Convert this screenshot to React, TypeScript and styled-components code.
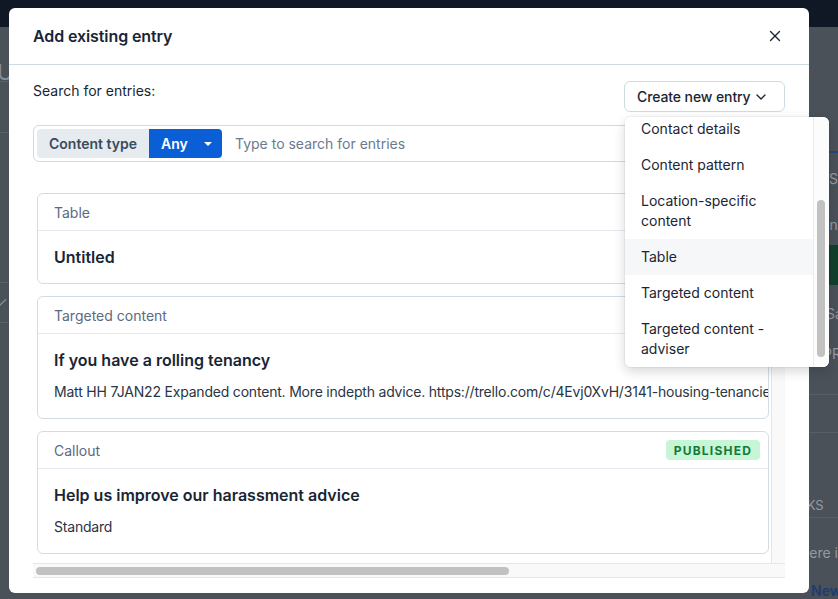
import React from 'react';
import styled, { createGlobalStyle } from 'styled-components';
import { X, ChevronDown, Check } from 'lucide-react';

const GlobalStyle = createGlobalStyle`
  html, body { margin: 0; padding: 0; }
  body { font-family: Inter, "Noto Sans", "Liberation Sans", sans-serif; }
  * { box-sizing: border-box; }
`;

const colors = {
  ink: '#1a2533',
  muted: '#5b6a80',
  border: '#d3dce3',
  divider: '#e3e9ee',
  blue: '#0b5fd6',
};

/* ---------- dimmed app behind the modal ---------- */

const Page = styled.div`
  position: relative;
  width: 838px;
  height: 599px;
  overflow: hidden;
  display: grid;
  grid-template-rows: 27px 1fr;
  background: #4a5159;
`;

const TopBar = styled.div`
  background: #0f1824;
`;

const Shell = styled.div`
  display: grid;
  grid-template-columns: 240px 1fr 62px;
`;

const SideRail = styled.div`
  display: flex;
  flex-direction: column;
  color: #878e96;
`;

interface RailRowProps {
  h: number;
  line?: boolean;
}

const RailRow = styled.div<RailRowProps>`
  height: ${(p) => p.h}px;
  display: flex;
  align-items: center;
  border-bottom: ${(p) => (p.line ? '1px solid #5a6169' : 'none')};
  font-size: 14px;
`;

const RailTitle = styled.span`
  font-size: 22px;
  margin-left: -3px;
  margin-top: 36px;
`;

const RightRail = styled.div`
  display: flex;
  flex-direction: column;
  color: #959ba2;
  font-size: 14px;
  white-space: nowrap;
  overflow: hidden;
`;

interface RailTextProps {
  indent: number;
  h: number;
  tone?: string;
}

const RailText = styled.div<RailTextProps>`
  flex-shrink: 0;
  height: ${(p) => p.h}px;
  padding-left: ${(p) => p.indent}px;
  display: flex;
  align-items: center;
  color: ${(p) => p.tone || 'inherit'};
`;

const TabLine = styled.div`
  flex-shrink: 0;
  height: 126px;
  border-bottom: 2px solid #23467a;
`;

const GreenBlock = styled.div`
  flex-shrink: 0;
  height: 40px;
  margin-left: 50px;
  background: #123f2c;
`;

const RuleRow = styled.div<{ h: number; line?: boolean }>`
  flex-shrink: 0;
  height: ${(p) => p.h}px;
  border-bottom: ${(p) => (p.line === false ? 'none' : '1px solid #575e66')};
`;

/* ---------- modal ---------- */

const Modal = styled.div`
  position: absolute;
  top: 8px;
  left: 9px;
  width: 800px;
  height: 585px;
  background: #fff;
  border-radius: 6px;
  display: flex;
  flex-direction: column;
  color: ${colors.ink};
`;

const Header = styled.div`
  height: 57px;
  flex-shrink: 0;
  padding: 0 24px;
  display: flex;
  align-items: center;
  justify-content: space-between;
  border-bottom: 1px solid #cfdbe2;
`;

const Title = styled.h2`
  margin: 0;
  font-size: 16px;
  font-weight: 600;
  letter-spacing: -0.1px;
`;

const CloseButton = styled.button`
  width: 24px;
  height: 24px;
  margin-right: -2px;
  border: none;
  background: none;
  padding: 0;
  display: flex;
  align-items: center;
  justify-content: center;
  color: ${colors.ink};
`;

const Body = styled.div`
  flex: 1;
  padding: 16px 24px 15px;
  display: flex;
  flex-direction: column;
`;

const TopRow = styled.div`
  height: 31px;
  display: flex;
  justify-content: space-between;
  align-items: flex-start;
`;

const Label = styled.span`
  font-size: 14px;
  line-height: 20px;
`;

const MenuWrap = styled.div`
  position: relative;
  z-index: 2;
`;

const CreateButton = styled.button`
  height: 31px;
  width: 161px;
  padding: 0 15px 0 12px;
  display: flex;
  align-items: center;
  justify-content: space-between;
  white-space: nowrap;
  border: 1px solid #cfdbe2;
  border-radius: 6px;
  background: #fff;
  font: inherit;
  font-size: 14px;
  font-weight: 500;
  letter-spacing: -0.1px;
  color: ${colors.ink};
`;

const Menu = styled.div`
  position: absolute;
  top: calc(100% + 5px);
  left: 1px;
  width: 204px;
  height: 250px;
  background: #fff;
  border-radius: 6px;
  box-shadow: 0 4px 12px rgba(15, 24, 36, 0.18), 0 0 0 1px rgba(15, 24, 36, 0.04);
  display: grid;
  grid-template-columns: 1fr 16px;
  overflow: hidden;
`;

const MenuList = styled.div`
  overflow: hidden;
`;

const MenuItems = styled.div`
  margin-top: -6px;
`;

const MenuItem = styled.div<{ active?: boolean }>`
  padding: 8px 16px;
  font-size: 14px;
  line-height: 20px;
  background: ${(p) => (p.active ? '#f5f7f9' : '#fff')};
`;

const MenuTrack = styled.div`
  border-left: 1px solid #ececec;
  background: #fcfcfc;
  padding: 83px 0 0 3px;
`;

const MenuThumb = styled.div`
  width: 8px;
  height: 157px;
  border-radius: 4px;
  background: #c1c1c1;
`;

const SearchBar = styled.div`
  margin-top: 13px;
  height: 37px;
  border: 1px solid #cfdbe2;
  border-radius: 6px;
  padding: 3px;
  display: flex;
  align-items: stretch;
`;

const TypeLabel = styled.span`
  width: 112px;
  padding-left: 12px;
  display: flex;
  align-items: center;
  background: #e5ebee;
  border-radius: 4px 0 0 4px;
  font-size: 14px;
  font-weight: 600;
  color: #3b4a5c;
`;

const AnySelect = styled.span`
  width: 73px;
  padding: 0 10px 0 12px;
  display: flex;
  align-items: center;
  justify-content: space-between;
  background: ${colors.blue};
  border-radius: 0 4px 4px 0;
  color: #fff;
  font-size: 14px;
  font-weight: 600;
`;

const Caret = styled.span`
  width: 0;
  height: 0;
  border-left: 4px solid transparent;
  border-right: 4px solid transparent;
  border-top: 4px solid #fff;
`;

const SearchInput = styled.input`
  flex: 1;
  border: none;
  outline: none;
  padding-left: 13px;
  font: inherit;
  font-size: 14px;
  color: ${colors.ink};
  &::placeholder {
    color: #6b7a8f;
  }
`;

const ListFrame = styled.div`
  margin-top: 27px;
  height: 389px;
  display: grid;
  grid-template-columns: 1fr 14px;
  grid-template-rows: 1fr 15px;
`;

const ListViewport = styled.div`
  overflow: hidden;
  padding: 4px 2px 0 4px;
  display: flex;
  flex-direction: column;
  gap: 12px;
`;

const VTrack = styled.div`
  background: #f9f9f9;
  border-left: 1px solid #e6e6e6;
`;

const HTrack = styled.div`
  grid-column: 1 / span 2;
  background: #f9f9f9;
  border-top: 1px solid #e6e6e6;
  border-bottom: 1px solid #e6e6e6;
  padding: 3px 0 0 3px;
`;

const HThumb = styled.div<{ w: number }>`
  width: ${(p) => p.w}px;
  height: 8px;
  border-radius: 4px;
  background: #c1c1c1;
`;

const Card = styled.div`
  flex-shrink: 0;
  border: 1px solid ${colors.border};
  border-radius: 6px;
  overflow: hidden;
`;

const CardHead = styled.div`
  height: 37px;
  padding: 0 8px 0 16px;
  display: flex;
  align-items: center;
  justify-content: space-between;
  border-bottom: 1px solid ${colors.divider};
  font-size: 14px;
  color: ${colors.muted};
`;

const CardBody = styled.div`
  padding: 16px;
`;

const CardTitle = styled.div`
  font-size: 16px;
  line-height: 20px;
  font-weight: 600;
`;

const CardText = styled.div`
  margin-top: 12px;
  font-size: 14px;
  line-height: 20px;
  letter-spacing: -0.2px;
  color: #2a3545;
  white-space: nowrap;
`;

const Badge = styled.span`
  height: 20px;
  padding: 0 8px;
  display: flex;
  align-items: center;
  border-radius: 4px;
  background: #c6f6d5;
  color: #137a3a;
  font-size: 12px;
  font-weight: 700;
  letter-spacing: 1.2px;
`;

interface Entry {
  type: string;
  title: string;
  text?: string;
  published?: boolean;
}

const entries: Entry[] = [
  { type: 'Table', title: 'Untitled' },
  {
    type: 'Targeted content',
    title: 'If you have a rolling tenancy',
    text: 'Matt HH 7JAN22 Expanded content. More indepth advice. https://trello.com/c/4Evj0XvH/3141-housing-tenancies-rolling-tenancy',
  },
  {
    type: 'Callout',
    title: 'Help us improve our harassment advice',
    text: 'Standard',
    published: true,
  },
];

const menuItems = [
  'Contact details',
  'Content pattern',
  'Location-specific content',
  'Table',
  'Targeted content',
  'Targeted content - adviser',
];

const App: React.FC = () => {
  return (
    <Page>
      <GlobalStyle />
      <TopBar />
      <Shell>
        <SideRail>
          <RailRow h={55} line>
            <RailTitle>Untitled</RailTitle>
          </RailRow>
          <RailRow h={51} line />
          <RailRow h={150} line />
          <RailRow h={40} line>
            <Check size={14} color="#878e96" style={{ marginLeft: -6 }} />
          </RailRow>
        </SideRail>
        <div />
        <RightRail>
          <TabLine />
          <RailText h={50} indent={53}>Status</RailText>
          <RailText h={42} indent={14}>Content</RailText>
          <GreenBlock />
          <RailText h={56} indent={50}>Save</RailText>
          <RailText h={24} indent={47}>PREVIEW</RailText>
          <RuleRow h={30} />
          <RuleRow h={38} />
          <RuleRow h={60} line={false} />
          <RailText h={24} indent={10} style={{ fontSize: 13 }}>
            LINKS
          </RailText>
          <RuleRow h={1} />
          <RailText h={68} indent={16}>There is</RailText>
          <RailText h={8} indent={35} tone="#1f3d6e">
            <b>New</b>
          </RailText>
        </RightRail>
      </Shell>

      <Modal>
        <Header>
          <Title>Add existing entry</Title>
          <CloseButton aria-label="Close">
            <X size={18} strokeWidth={1.8} />
          </CloseButton>
        </Header>
        <Body>
          <TopRow>
            <Label>Search for entries:</Label>
            <MenuWrap>
              <CreateButton>
                Create new entry
                <ChevronDown size={16} strokeWidth={2} />
              </CreateButton>
              <Menu>
                <MenuList>
                  <MenuItems>
                    {menuItems.map((item) => (
                      <MenuItem key={item} active={item === 'Table'}>
                        {item}
                      </MenuItem>
                    ))}
                  </MenuItems>
                </MenuList>
                <MenuTrack>
                  <MenuThumb />
                </MenuTrack>
              </Menu>
            </MenuWrap>
          </TopRow>

          <SearchBar>
            <TypeLabel>Content type</TypeLabel>
            <AnySelect>
              Any
              <Caret />
            </AnySelect>
            <SearchInput placeholder="Type to search for entries" />
          </SearchBar>

          <ListFrame>
            <ListViewport>
              {entries.map((e) => (
                <Card key={e.title}>
                  <CardHead>
                    {e.type}
                    {e.published && <Badge>PUBLISHED</Badge>}
                  </CardHead>
                  <CardBody>
                    <CardTitle>{e.title}</CardTitle>
                    {e.text && <CardText>{e.text}</CardText>}
                  </CardBody>
                </Card>
              ))}
            </ListViewport>
            <VTrack />
            <HTrack>
              <HThumb w={473} />
            </HTrack>
          </ListFrame>
        </Body>
      </Modal>
    </Page>
  );
};

export default App;
